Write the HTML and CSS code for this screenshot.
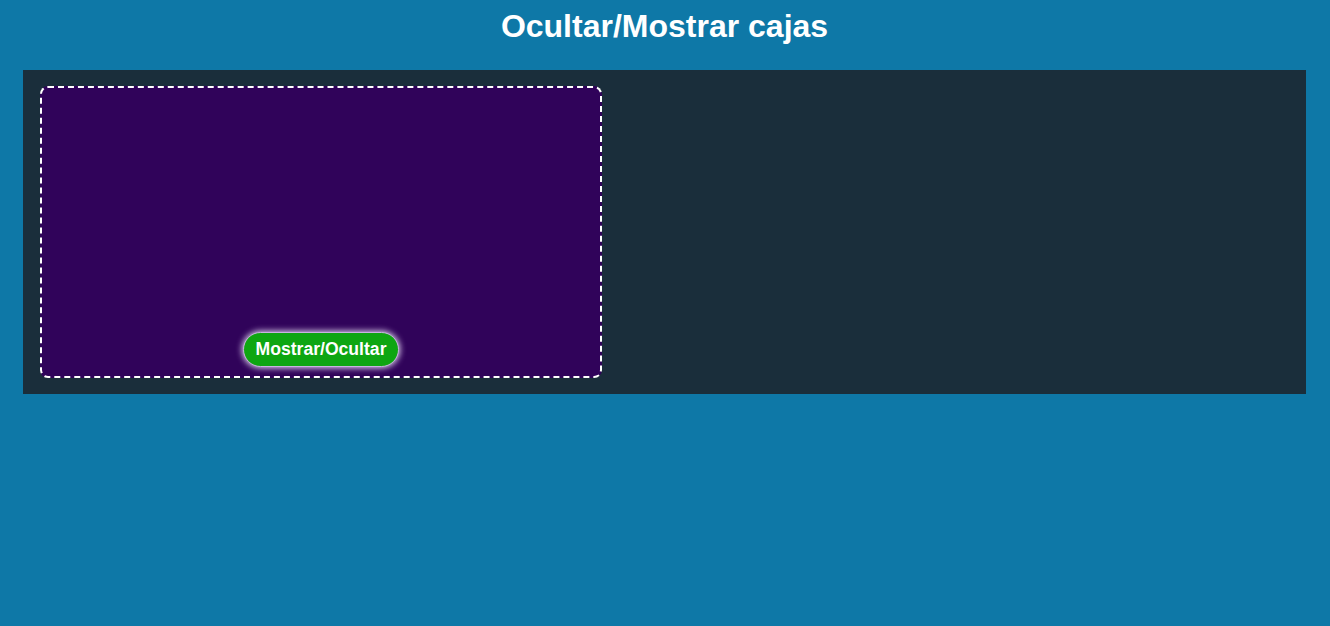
FILE: index.html
```html
<!DOCTYPE html>
<html lang="es">
<head>
<meta charset="utf-8">
<title>Ocultar/Mostrar cajas</title>
<link rel="stylesheet" href="styles.css">
</head>
<body>
  <h1 class="title">Ocultar/Mostrar cajas</h1>
  <main class="panel">
    <section class="box">
      <button class="toggle" type="button">Mostrar/Ocultar</button>
    </section>
  </main>
</body>
</html>
```

FILE: styles.css
```css
html, body {
  margin: 0;
  background: #0e78a7;
}
body {
  padding: 8px 24px 0 23px;
  font-family: "Liberation Sans", Arial, sans-serif;
}
.title {
  margin: 0 0 25px;
  color: #fff;
  font-size: 32px;
  font-weight: bold;
  text-align: center;
  line-height: 37px;
}
.panel {
  background: #1a2e3b;
  padding: 16px 17px;
  display: flex;
}
.box {
  box-sizing: border-box;
  width: 562px;
  height: 292px;
  background: #30035a;
  border: 2px dashed #fff;
  border-radius: 8px;
  display: flex;
  align-items: flex-end;
  justify-content: center;
  padding-bottom: 9px;
}
.toggle {
  font-family: "Liberation Sans", Arial, sans-serif;
  font-size: 17.6px;
  font-weight: bold;
  color: #fff;
  background: #0ea612;
  border: 1px solid #c9b3e0;
  border-radius: 18px;
  padding: 0 11px;
  height: 35px;
  box-shadow: 0 0 6px 1px #e6d9f5;
  cursor: pointer;
}
```
